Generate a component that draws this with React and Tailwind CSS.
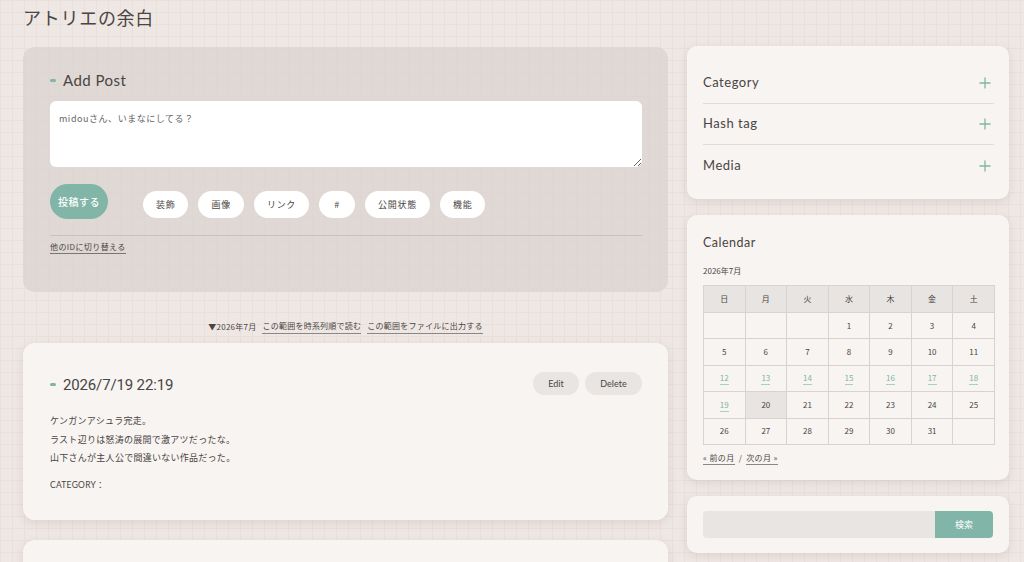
import React from "react";

const jp = "font-['Noto_Sans_CJK_JP','Noto_Sans',sans-serif]";
const head = "font-['Lato','Noto_Sans_CJK_JP',sans-serif]";

const tools = ["装飾", "画像", "リンク", "#", "公開状態", "機能"];
const weeks = [
  ["", "", "", "1", "2", "3", "4"],
  ["5", "6", "7", "8", "9", "10", "11"],
  ["12", "13", "14", "15", "16", "17", "18"],
  ["19", "20", "21", "22", "23", "24", "25"],
  ["26", "27", "28", "29", "30", "31", ""],
];
const linked = ["12", "13", "14", "15", "16", "17", "18", "19"];

function Plus() {
  return (
    <svg width="12" height="12" viewBox="0 0 12 12" className="text-[#80b5a7]">
      <path d="M6 0.5V11.5M0.5 6H11.5" stroke="currentColor" strokeWidth="1.3" />
    </svg>
  );
}

const card = "bg-[#f8f4f2]/95 shadow-[0_3px_10px_rgba(120,100,95,0.15)]";

const App = () => {
  return (
    <div
      className={`min-h-screen text-[#4a4542] bg-[#efe7e4] bg-[linear-gradient(to_right,#e8e0dd_1px,transparent_1px),linear-gradient(to_bottom,#e8e0dd_1px,transparent_1px)] bg-[size:12px_12px] ${jp}`}
    >
      <div className="pl-[23px] pr-[15px]">
        <h1 className="pt-[5px] text-[18px] leading-[24px] tracking-[0.04em] text-[#4a4542]">アトリエの余白</h1>

        <div className="flex gap-[19px] mt-[18px]">
          {/* Main column */}
          <div className="w-[645px] shrink-0 flex flex-col">
            {/* Add Post */}
            <div className="bg-[#d9d1cd]/70 rounded-[12px] h-[245px] pt-[24px] pl-[27px] pr-[26px]">
              <div className="flex items-center gap-[7px]">
                <span className="w-[6px] h-[3px] rounded-full bg-[#80b5a7]" />
                <h2 className={`${head} text-[15px] leading-[18px] tracking-[0.03em]`}>Add Post</h2>
              </div>
              <textarea
                className="block mt-[12px] w-full h-[66px] bg-white rounded-[6px] px-[9px] py-[11px] text-[9px] leading-[14px] tracking-[0.06em] resize-y outline-none placeholder-[#666]"
                placeholder="midouさん、いまなにしてる？"
              />
              <div className="flex items-center mt-[17px]">
                <button className="w-[58px] h-[35px] rounded-full bg-[#80b5a7] text-white text-[10px] font-medium tracking-[0.05em] mr-[35px]">
                  投稿する
                </button>
                <div className="flex gap-[10px] mt-[6px]">
                  {tools.map((t) => (
                    <button
                      key={t}
                      className="h-[27px] px-[13px] min-w-[36px] rounded-full bg-white text-[9px] tracking-[0.08em] text-[#4a4542]"
                    >
                      {t}
                    </button>
                  ))}
                </div>
              </div>
              <div className="border-t border-[#c9c1bd] mt-[16px] pt-[6px] text-[8px] leading-[10px]">
                <a className="tracking-[0.05em] border-b border-[#777] pb-[1px]">他のIDに切り替える</a>
              </div>
            </div>

            {/* Range links */}
            <div className="flex justify-center items-center gap-[4px] mt-[28px] text-[8px] leading-[12px] tracking-[0.03em]">
              <span>▼2026年7月</span>
              <a className="border-b border-[#888] pb-[1px] ml-[2px]">この範囲を時系列順で読む</a>
              <a className="border-b border-[#888] pb-[1px] ml-[2px]">この範囲をファイルに出力する</a>
            </div>

            {/* Post */}
            <div className={`${card} mt-[9px] rounded-[12px] h-[177px] pt-[29px] pl-[27px] pr-[26px]`}>
              <div className="flex items-center justify-between">
                <div className="flex items-center gap-[7px] mt-[2px]">
                  <span className="w-[6px] h-[3px] rounded-full bg-[#80b5a7]" />
                  <h2 className="font-['Roboto',sans-serif] text-[15px] leading-[18px] tracking-[-0.01em]">2026/7/19 22:19</h2>
                </div>
                <div className="flex gap-[6px]">
                  <button className={`${head} w-[46px] h-[23px] rounded-full bg-[#e8e5e2] text-[9px]`}>Edit</button>
                  <button className={`${head} w-[57px] h-[23px] rounded-full bg-[#e8e5e2] text-[9px]`}>Delete</button>
                </div>
              </div>
              <div className="mt-[17px] text-[9px] leading-[18.5px] tracking-[0.03em]">
                <p>ケンガンアシュラ完走。</p>
                <p>ラスト辺りは怒涛の展開で激アツだったな。</p>
                <p>山下さんが主人公で間違いない作品だった。</p>
              </div>
              <p className={`${head} mt-[11px] text-[8.5px] tracking-[0.03em]`}>CATEGORY：</p>
            </div>

            <div className={`${card} mt-[20px] rounded-[12px] h-[120px]`} />
          </div>

          {/* Sidebar */}
          <div className="w-[322px] shrink-0 flex flex-col gap-[16px] -mt-[1px]">
            <div className={`${card} rounded-[10px] pl-[16px] pr-[15px] pt-[17px] pb-[13px]`}>
              {["Category", "Hash tag", "Media"].map((s, i) => (
                <div
                  key={s}
                  className={`flex items-center justify-between h-[41px] ${i < 2 ? "border-b border-[#e0dbd8]" : ""}`}
                >
                  <span className={`${head} text-[13px] tracking-[0.04em]`}>{s}</span>
                  <span className="mr-[3px]"><Plus /></span>
                </div>
              ))}
            </div>

            <div className={`${card} rounded-[10px] px-[16px] pt-[20px] pb-[15px]`}>
              <h3 className={`${head} text-[12.5px] leading-[16px] tracking-[0.04em]`}>Calendar</h3>
              <p className="mt-[15px] text-[8px] leading-[10px]">2026年7月</p>
              <table className="mt-[9px] w-[292px] border-collapse text-[8px] text-center">
                <thead>
                  <tr className="bg-[#e7e4e2]">
                    {["日", "月", "火", "水", "木", "金", "土"].map((d) => (
                      <th key={d} className="h-[27px] font-normal border border-[#d8d3d0]">{d}</th>
                    ))}
                  </tr>
                </thead>
                <tbody>
                  {weeks.map((w, i) => (
                    <tr key={i}>
                      {w.map((d, j) => (
                        <td
                          key={j}
                          className={`h-[26.4px] border border-[#d8d3d0] ${d === "20" ? "bg-[#e7e4e2]" : ""}`}
                        >
                          {linked.includes(d) ? (
                            <span className="text-[#80b5a7] border-b border-[#a9cfc5] pb-[1px]">{d}</span>
                          ) : (
                            d
                          )}
                        </td>
                      ))}
                    </tr>
                  ))}
                </tbody>
              </table>
              <div className="mt-[8px] text-[8px] leading-[10px] tracking-[0.05em] flex gap-[4px]">
                <a className="border-b border-[#888] pb-[1px]">« 前の月</a>
                <span>/</span>
                <a className="border-b border-[#888] pb-[1px]">次の月 »</a>
              </div>
            </div>

            <div className={`${card} rounded-[10px] px-[16px] py-[15px] flex`}>
              <input className="h-[27px] flex-1 bg-[#e8e5e3] rounded-l-[4px] outline-none px-[8px] text-[10px]" />
              <button className="h-[27px] w-[58px] bg-[#80b5a7] text-white text-[9px] rounded-r-[4px]">検索</button>
            </div>
          </div>
        </div>
      </div>
    </div>
  );
};

export default App;
